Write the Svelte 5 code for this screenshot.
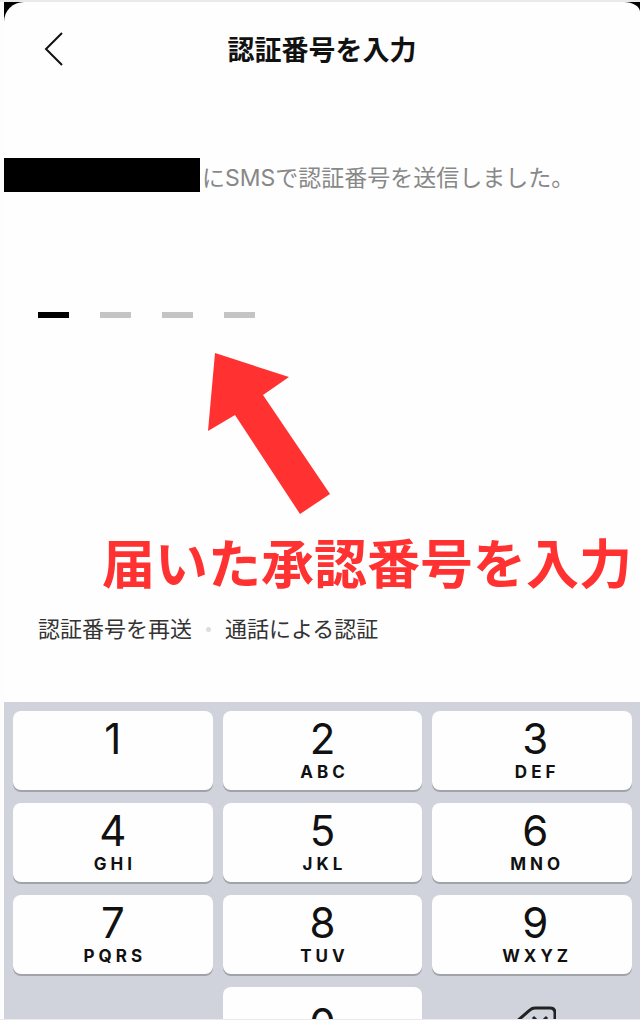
<script lang="ts">
interface Key {
  digit: string;
  letters: string;
}

const keys: Key[] = [
  { digit: '1', letters: '' },
  { digit: '2', letters: 'ABC' },
  { digit: '3', letters: 'DEF' },
  { digit: '4', letters: 'GHI' },
  { digit: '5', letters: 'JKL' },
  { digit: '6', letters: 'MNO' },
  { digit: '7', letters: 'PQRS' },
  { digit: '8', letters: 'TUV' },
  { digit: '9', letters: 'WXYZ' },
];

let code = $state(['', '', '', '']);
const active = $derived(code.findIndex((c) => c === ''));

function press(digit: string) {
  if (active >= 0) code[active] = digit;
}

function erase() {
  const last = active < 0 ? code.length - 1 : active - 1;
  if (last >= 0) code[last] = '';
}
</script>

<div class="page">
  <div class="device">
    <main class="sheet">
      <header class="head">
        <button type="button" class="back" aria-label="戻る">
          <svg width="20" height="36" viewBox="0 0 20 36" aria-hidden="true">
            <path d="M18 2 2 18l16 16" fill="none" stroke="#111" stroke-width="2" />
          </svg>
        </button>
        <h1>認証番号を入力</h1>
      </header>

      <p class="message">
        <span class="redacted"></span>
        <span>にSMSで認証番号を送信しました。</span>
      </p>

      <div class="code">
        {#each code as _, i}
          <input
            class:active={i === active}
            bind:value={code[i]}
            inputmode="numeric"
            maxlength="1"
            aria-label={`認証番号 ${i + 1}桁目`}
          />
        {/each}
      </div>

      <div class="hint">
        <svg width="122" height="162" viewBox="0 0 122 162" aria-hidden="true">
          <path d="M7 0 81 24 55 42l67 99-30 20L27 62 0 78z" fill="#ff3131" />
        </svg>
        <strong>届いた承認番号を入力</strong>
      </div>

      <nav class="links">
        <a href="#resend">認証番号を再送</a>
        <span class="dot"></span>
        <a href="#call">通話による認証</a>
      </nav>
    </main>
  </div>

  <div class="keypad">
    {#each keys as key}
      <button type="button" class="key" onclick={() => press(key.digit)}>
        <span class="digit">{key.digit}</span>
        <span class="letters">{key.letters}</span>
      </button>
    {/each}
    <button type="button" class="key zero" onclick={() => press('0')}>
      <span class="digit">0</span>
    </button>
    <button type="button" class="erase" aria-label="削除" onclick={erase}>
      <svg width="48" height="36" viewBox="0 0 48 36" fill="none" stroke="#222" stroke-width="3" aria-hidden="true">
        <path d="M27 2h15q5 0 5 5v22q0 5-5 5H27q-3 0-5-2L8 20q-2-2 0-4L22 4q2-2 5-2z" />
        <path d="m25 11 14 14M39 11 25 25" />
      </svg>
    </button>
  </div>
</div>

<style>
  :global(body) {
    margin: 0;
    background: #fdfdfd;
  }
  .page {
    box-sizing: border-box;
    height: 100vh;
    overflow: hidden;
    padding-left: 4px;
    border-top: 2px solid #e9e9ee;
    border-bottom: 1px solid #e9e9ee;
    font-family: Inter, "Noto Sans CJK JP", sans-serif;
    color: #111;
  }
  .device {
    background: linear-gradient(#000 30px, #fdfdfd 30px);
  }
  .sheet {
    display: flex;
    flex-direction: column;
    padding-bottom: 57px;
    background: #fefefe;
    border-radius: 20px 16px 0 0 / 20px 10px 0 0;
  }
  .head {
    display: grid;
    grid-template-columns: 80px 1fr 80px;
    align-items: center;
    height: 94px;
  }
  .back {
    display: flex;
    padding: 0 0 0 40px;
    border: 0;
    background: none;
    cursor: pointer;
  }
  h1 {
    margin: 0;
    padding-top: 4px;
    text-align: center;
    font-size: 27px;
    line-height: 40px;
    font-weight: 700;
  }
  .message {
    display: flex;
    align-items: flex-end;
    gap: 2px;
    margin: 62px 0 0;
    font-size: 23px;
    line-height: 28px;
    white-space: nowrap;
    color: #888;
  }
  .redacted {
    width: 196px;
    height: 34px;
    background: #000;
  }
  .code {
    display: flex;
    gap: 31px;
    margin: 80px 0 0 34px;
  }
  .code input {
    box-sizing: border-box;
    width: 31px;
    height: 46px;
    padding: 0;
    border: 0;
    border-bottom: 6px solid #c4c4c4;
    border-radius: 0;
    outline: 0;
    background: none;
    font: inherit;
    font-size: 28px;
    text-align: center;
  }
  .code input.active { border-color: #000; }
  .hint {
    display: flex;
    flex-direction: column;
    margin: 35px 8px 0 0;
    color: #ff3131;
  }
  .hint svg { margin-left: 204px; }
  .hint strong {
    margin-top: 18px;
    text-align: right;
    font-size: 53px;
    line-height: 64px;
    font-weight: 700;
    white-space: nowrap;
  }
  .links {
    display: flex;
    align-items: center;
    gap: 14px;
    margin: 16px 0 0 34px;
    font-size: 22px;
    line-height: 32px;
  }
  .links a {
    color: #333;
    text-decoration: none;
  }
  .dot {
    width: 5px;
    height: 5px;
    border-radius: 50%;
    background: #ddd;
  }
  .keypad {
    display: grid;
    grid-template-columns: repeat(3, 1fr);
    grid-auto-rows: 79px;
    gap: 13px 10px;
    padding: 9px 8px 12px 9px;
    background: #d0d3db;
  }
  .key {
    display: flex;
    flex-direction: column;
    align-items: center;
    padding: 7px 0 0;
    border: 0;
    border-radius: 8px;
    background: #fefefe;
    box-shadow: 0 2px 0 #a0a3a8;
    font-family: inherit;
    color: #111;
    cursor: pointer;
  }
  .key:nth-child(3n) { padding-left: 6px; }
  .digit {
    font-size: 42px;
    line-height: 42px;
  }
  .letters {
    padding-left: 4px;
    font-size: 17px;
    line-height: 24px;
    font-weight: 700;
    letter-spacing: 4px;
  }
  .zero {
    grid-column: 2;
    justify-content: center;
    padding: 0 0 6px;
  }
  .erase {
    display: flex;
    align-items: center;
    justify-content: center;
    padding: 0 0 6px;
    border: 0;
    background: none;
    cursor: pointer;
  }
</style>
